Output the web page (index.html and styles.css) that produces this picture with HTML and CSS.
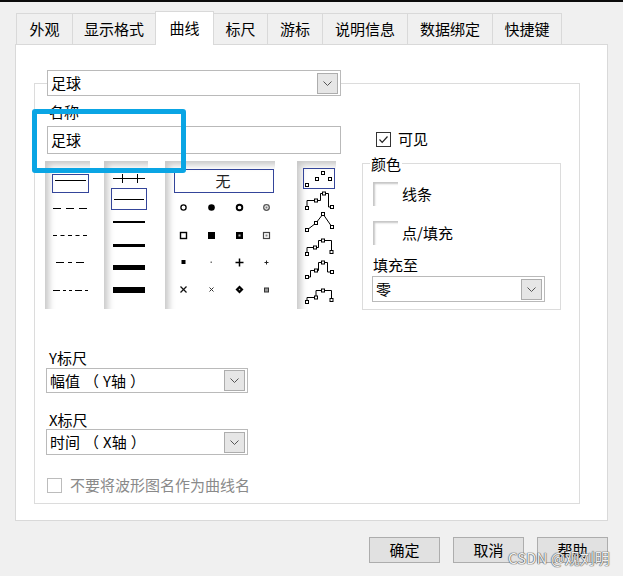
FILE: index.html
```html
<!DOCTYPE html>
<html lang="zh-CN">
<head>
<meta charset="utf-8">
<title>曲线属性</title>
<link rel="stylesheet" href="styles.css">
</head>
<body>
<div class="page">
  <div class="topbar"></div>
  <div class="tabs">
    <div class="tab tab-appearance">外观</div>
    <div class="tab tab-format">显示格式</div>
    <div class="tab tab-plot active">曲线</div>
    <div class="tab tab-scale">标尺</div>
    <div class="tab tab-cursor">游标</div>
    <div class="tab tab-doc">说明信息</div>
    <div class="tab tab-binding">数据绑定</div>
    <div class="tab tab-keys last">快捷键</div>
  </div>

  <div class="panel">
    <div class="group">
      <div class="combo combo-plot">
        <span class="combo-text">足球</span>
        <span class="combo-btn"><svg width="9" height="5" viewBox="0 0 9 5"><polyline points="0.5,0.5 4.5,4.5 8.5,0.5" fill="none" stroke="#555" stroke-width="1"/></svg></span>
      </div>

      <div class="label name-label">名称</div>
      <div class="name-row">
        <div class="textbox">足球</div>
        <div class="check check-visible">
          <span class="box"><svg width="13" height="13" viewBox="0 0 13 13"><polyline points="2.5,6.5 5.2,9.3 10.5,3.5" fill="none" stroke="#222" stroke-width="1.2"/></svg></span>
          <span>可见</span>
        </div>
      </div>

      <div class="style-row">
        <div class="list list-line">
          <svg width="45" height="148" viewBox="0 0 45 148">
            <rect x="7.5" y="13.5" width="36" height="18" fill="none" stroke="#34459a"/>
            <line x1="10" y1="19.5" x2="41" y2="19.5" stroke="#000"/>
            <line x1="8" y1="47.5" x2="43" y2="47.5" stroke="#000" stroke-dasharray="8 5"/>
            <line x1="8" y1="74.5" x2="43" y2="74.5" stroke="#000" stroke-dasharray="4 3.5"/>
            <line x1="11" y1="101.5" x2="43" y2="101.5" stroke="#000" stroke-dasharray="8 4 4 4"/>
            <line x1="8" y1="129.5" x2="43" y2="129.5" stroke="#000" stroke-dasharray="7 3 3 3 3 3"/>
          </svg>
        </div>
        <div class="list list-width">
          <svg width="44" height="148" viewBox="0 0 44 148">
            <line x1="9" y1="17.5" x2="41" y2="17.5" stroke="#000"/>
            <line x1="18.5" y1="13" x2="18.5" y2="22" stroke="#000"/>
            <line x1="33.5" y1="13" x2="33.5" y2="22" stroke="#000"/>
            <rect x="7.5" y="27.5" width="35" height="21" fill="none" stroke="#34459a"/>
            <line x1="10" y1="38.5" x2="40" y2="38.5" stroke="#000"/>
            <line x1="9" y1="61" x2="41" y2="61" stroke="#000" stroke-width="2"/>
            <line x1="9" y1="84.5" x2="41" y2="84.5" stroke="#000" stroke-width="3"/>
            <line x1="9" y1="106.5" x2="41" y2="106.5" stroke="#000" stroke-width="5"/>
            <line x1="9" y1="129" x2="41" y2="129" stroke="#000" stroke-width="6"/>
          </svg>
        </div>
        <div class="list list-point">
          <svg width="110" height="148" viewBox="0 0 110 148">
            <rect x="9.5" y="8.5" width="99" height="23" fill="none" stroke="#34459a"/>
            <text x="58" y="25.5" text-anchor="middle" class="svg-text">无</text>
            <!-- row 1 -->
            <circle cx="18.5" cy="46.5" r="2.6" fill="#fff" stroke="#000" stroke-width="1.3"/>
            <circle cx="46.5" cy="46.5" r="3.3" fill="#000"/>
            <circle cx="74.5" cy="46.5" r="2.8" fill="#fff" stroke="#000" stroke-width="1.9"/>
            <circle cx="101.5" cy="46.5" r="2.8" fill="#fff" stroke="#555" stroke-width="1.3"/>
            <rect x="100.5" y="45.5" width="2" height="2" fill="#777"/>
            <!-- row 2 -->
            <rect x="15.5" y="71.5" width="6" height="6" fill="#fff" stroke="#000" stroke-width="1.4"/>
            <rect x="43" y="71" width="7" height="7" fill="#000"/>
            <rect x="71" y="71" width="7" height="7" fill="#000"/>
            <rect x="73.5" y="73.5" width="2" height="2" fill="#bbb"/>
            <rect x="98.5" y="71.5" width="6" height="6" fill="#fff" stroke="#444" stroke-width="1.2"/>
            <rect x="100.5" y="73.5" width="2" height="2" fill="#888"/>
            <!-- row 3 -->
            <rect x="16.5" y="99" width="4" height="4" fill="#000"/>
            <rect x="45.5" y="100.5" width="1.5" height="1.5" fill="#777"/>
            <line x1="70.5" y1="101.5" x2="78.5" y2="101.5" stroke="#000" stroke-width="1.5"/>
            <line x1="74.5" y1="97.5" x2="74.5" y2="105.5" stroke="#000" stroke-width="1.5"/>
            <line x1="99.5" y1="101.5" x2="103.5" y2="101.5" stroke="#222" stroke-width="1"/>
            <line x1="101.5" y1="99.5" x2="101.5" y2="103.5" stroke="#222" stroke-width="1"/>
            <!-- row 4 -->
            <line x1="15.5" y1="125.5" x2="21.5" y2="131.5" stroke="#111" stroke-width="1.3"/>
            <line x1="21.5" y1="125.5" x2="15.5" y2="131.5" stroke="#111" stroke-width="1.3"/>
            <line x1="44.5" y1="126.5" x2="48.5" y2="130.5" stroke="#333" stroke-width="1"/>
            <line x1="48.5" y1="126.5" x2="44.5" y2="130.5" stroke="#333" stroke-width="1"/>
            <polygon points="74.5,124.5 78.5,128.5 74.5,132.5 70.5,128.5" fill="#000"/>
            <rect x="73.8" y="127.8" width="1.4" height="1.4" fill="#ccc"/>
            <rect x="99.5" y="127" width="4" height="4" fill="#999" stroke="#333" stroke-width="1"/>
          </svg>
        </div>
        <div class="list list-interp">
          <svg width="39" height="148" viewBox="0 0 39 148">
            <rect x="6.5" y="7.5" width="31" height="20" fill="none" stroke="#34459a"/>
            <g fill="#fff" stroke="#000" stroke-width="1">
              <rect x="8.5" y="22.5" width="3" height="3"/>
              <rect x="18.5" y="16.5" width="3" height="3"/>
              <rect x="24.5" y="10.5" width="3" height="3"/>
              <rect x="31.5" y="16.5" width="3" height="3"/>
            </g>
            <g fill="none" stroke="#000" stroke-width="1">
              <polyline points="10,47 10,39.5 19,39.5 23.5,39.5 23.5,32.5 31.5,32.5 31.5,46 35,46"/>
              <polyline points="10,69 19,62 26,53 35,66"/>
              <polyline points="10,93 10,86.5 18,86.5 21.5,86.5 21.5,79.5 26,79.5 34.5,79.5 34.5,91"/>
              <polyline points="10,116 13.5,116 13.5,109.5 19,109.5 21.5,109.5 21.5,101.5 26,101.5 30.5,101.5 30.5,111 35,111"/>
              <polyline points="10,141 10,136.5 19,136.5 19,129.5 26,129.5 34.5,129.5 34.5,139"/>
            </g>
            <g fill="#fff" stroke="#000" stroke-width="1">
              <rect x="8.5" y="45.5" width="3" height="3"/>
              <rect x="17.5" y="38" width="3" height="3"/>
              <rect x="25.5" y="31" width="3" height="3"/>
              <rect x="33.5" y="44.5" width="3" height="3"/>

              <rect x="8.5" y="67.5" width="3" height="3"/>
              <rect x="17.5" y="60.5" width="3" height="3"/>
              <rect x="24.5" y="51.5" width="3" height="3"/>
              <rect x="33.5" y="64.5" width="3" height="3"/>

              <rect x="8.5" y="91.5" width="3" height="3"/>
              <rect x="16.5" y="85" width="3" height="3"/>
              <rect x="24.5" y="78" width="3" height="3"/>
              <rect x="33" y="89.5" width="3" height="3"/>

              <rect x="8.5" y="114.5" width="3" height="3"/>
              <rect x="17.5" y="108" width="3" height="3"/>
              <rect x="24.5" y="100" width="3" height="3"/>
              <rect x="33.5" y="109.5" width="3" height="3"/>

              <rect x="8.5" y="139.5" width="3" height="3"/>
              <rect x="17.5" y="135" width="3" height="3"/>
              <rect x="24.5" y="128" width="3" height="3"/>
              <rect x="33" y="137.5" width="3" height="3"/>
            </g>
          </svg>
        </div>

        <div class="colorgroup">
          <span class="legend">颜色</span>
          <div class="swatch-row row-line"><span class="swatch"></span><span>线条</span></div>
          <div class="swatch-row row-fill"><span class="swatch"></span><span>点/填充</span></div>
          <div class="label fill-label">填充至</div>
          <div class="combo combo-fill">
            <span class="combo-text">零</span>
            <span class="combo-btn"><svg width="9" height="5" viewBox="0 0 9 5"><polyline points="0.5,0.5 4.5,4.5 8.5,0.5" fill="none" stroke="#555" stroke-width="1"/></svg></span>
          </div>
        </div>
      </div>

      <div class="label y-label">Y标尺</div>
      <div class="combo combo-y">
        <span class="combo-text">幅值<span class="paren-open">（</span>Y轴<span class="paren-close">）</span></span>
        <span class="combo-btn"><svg width="9" height="5" viewBox="0 0 9 5"><polyline points="0.5,0.5 4.5,4.5 8.5,0.5" fill="none" stroke="#555" stroke-width="1"/></svg></span>
      </div>

      <div class="label x-label">X标尺</div>
      <div class="combo combo-x">
        <span class="combo-text">时间<span class="paren-open">（</span>X轴<span class="paren-close">）</span></span>
        <span class="combo-btn"><svg width="9" height="5" viewBox="0 0 9 5"><polyline points="0.5,0.5 4.5,4.5 8.5,0.5" fill="none" stroke="#555" stroke-width="1"/></svg></span>
      </div>

      <div class="check check-disabled">
        <span class="box"></span>
        <span>不要将波形图名作为曲线名</span>
      </div>
    </div>
  </div>

  <div class="buttons">
    <div class="btn">确定</div>
    <div class="btn">取消</div>
    <div class="btn">帮助</div>
  </div>

  <div class="highlight"></div>
  <div class="watermark">CSDN @观刘明</div>
</div>
</body>
</html>
```

FILE: styles.css
```css
* {
  box-sizing: border-box;
}

html,
body {
  margin: 0;
  padding: 0;
}

body {
  background: #f0f0f0;
  font-family: "Noto Sans CJK SC", "Noto Sans", sans-serif;
  font-size: 15px;
  color: #000;
}

.page {
  position: relative;
  width: 623px;
  height: 576px;
  overflow: hidden;
}

.topbar {
  height: 2px;
  background: #0b0b0b;
}

/* ---------- tabs ---------- */
.tabs {
  display: flex;
  align-items: flex-end;
  margin: 9px 0 0 16px;
}

.tab {
  height: 31px;
  line-height: 30px;
  text-align: center;
  white-space: nowrap;
  background: #f0f0f0;
  border-top: 1px solid #d9d9d9;
  border-left: 1px solid #d9d9d9;
}

.tab.last {
  border-right: 1px solid #d9d9d9;
}

.tab.active {
  position: relative;
  z-index: 1;
  height: 34px;
  line-height: 31px;
  margin-bottom: -1px;
  background: #fff;
  border-right: 1px solid #d9d9d9;
}

.tab.active + .tab {
  border-left: none;
}

.tab-appearance { width: 56px; }
.tab-format { width: 83px; }
.tab-plot { width: 59px; }
.tab-scale { width: 53px; }
.tab-cursor { width: 55px; }
.tab-doc { width: 85px; }
.tab-binding { width: 85px; }
.tab-keys { width: 70px; }

/* ---------- panel ---------- */
.panel {
  margin-left: 15px;
  width: 593px;
  height: 477px;
  background: #fff;
  border: 1px solid #d9d9d9;
  padding: 38px 0 0 18px;
}

.group {
  width: 546px;
  height: 421px;
  border: 1px solid #dcdcdc;
}

.label {
  height: 16px;
  line-height: 16px;
  white-space: nowrap;
}

/* ---------- combo boxes ---------- */
.combo {
  display: flex;
  align-items: center;
  background: #fff;
  border: 1px solid #bababa;
}

.combo-text {
  flex: 1;
  padding-left: 3px;
  line-height: 16px;
  white-space: nowrap;
}

.paren-open {
  margin-left: 4px;
  margin-right: 4px;
}

.paren-close {
  margin-left: 4px;
}

.combo-btn {
  width: 21px;
  height: 21px;
  margin-right: 2px;
  display: flex;
  align-items: center;
  justify-content: center;
  background: #e6e6e6;
  border: 1px solid #adadad;
}

.combo-btn svg {
  display: block;
}

.combo-plot {
  margin: -14px 0 0 12px;
  width: 294px;
  height: 26px;
}

.name-label {
  margin: 8px 0 0 14px;
}

.name-row {
  display: flex;
  align-items: flex-start;
  margin-top: 6px;
}

.textbox {
  margin-left: 12px;
  width: 294px;
  height: 28px;
  border: 1px solid #b9b9b9;
  padding-left: 3px;
  line-height: 26px;
}

/* ---------- checkboxes ---------- */
.check {
  display: flex;
  align-items: center;
  line-height: 16px;
  white-space: nowrap;
}

.check .box {
  width: 15px;
  height: 15px;
  background: #fff;
  border: 1px solid #333;
  display: flex;
  align-items: center;
  justify-content: center;
}

.check .box svg {
  display: block;
}

.check-visible {
  margin: 5px 0 0 35px;
  gap: 7px;
}

.check-disabled {
  margin: 22px 0 0 12px;
  gap: 8px;
  color: #8a8a8a;
}

.check-disabled .box {
  border-color: #bcbcbc;
}

/* ---------- style lists ---------- */
.style-row {
  display: flex;
  align-items: flex-start;
  margin-top: 7px;
}

.list {
  height: 148px;
  background: #fff;
  box-shadow: inset 6px 6px 6px -2px #c9c9c9;
}

.list svg {
  display: block;
}

.svg-text {
  font-family: "Noto Sans CJK SC", sans-serif;
  font-size: 15px;
  fill: #222;
}

.list-line {
  width: 45px;
  margin-left: 10px;
}

.list-width {
  width: 44px;
  margin-left: 14px;
}

.list-point {
  width: 110px;
  margin-left: 17px;
}

.list-interp {
  width: 39px;
  margin-left: 22px;
}

/* ---------- colour group ---------- */
.colorgroup {
  width: 199px;
  height: 147px;
  margin: 2px 0 0 26px;
  padding-left: 10px;
  border: 1px solid #dcdcdc;
}

.legend {
  display: block;
  width: max-content;
  margin: -8px 0 0 -3px;
  padding: 0 1px;
  background: #fff;
  line-height: 16px;
}

.swatch-row {
  display: flex;
  align-items: center;
  gap: 4px;
  line-height: 16px;
}

.row-line {
  margin-top: 10px;
}

.row-fill {
  margin-top: 15px;
}

.swatch {
  width: 25px;
  height: 24px;
  background: #fff;
  box-shadow: inset 3px 3px 2px -1px #c6c6c6;
}

.fill-label {
  margin-top: 12px;
}

.combo-fill {
  margin: 3px 0 0 -1px;
  width: 173px;
  height: 26px;
}

/* ---------- scales ---------- */
.y-label {
  margin: 40px 0 0 14px;
}

.combo-y {
  margin: 2px 0 0 11px;
  width: 202px;
  height: 25px;
}

.x-label {
  margin: 19px 0 0 14px;
}

.combo-x {
  margin: 1px 0 0 11px;
  width: 202px;
  height: 26px;
}

/* ---------- dialog buttons ---------- */
.buttons {
  display: flex;
  justify-content: flex-end;
  gap: 13px;
  margin-top: 16px;
  padding-right: 15px;
}

.btn {
  width: 71px;
  height: 26px;
  line-height: 24px;
  text-align: center;
  background: #e1e1e1;
  border: 1px solid #adadad;
}

/* ---------- overlays ---------- */
.highlight {
  position: absolute;
  left: 32px;
  top: 109px;
  width: 154px;
  height: 64px;
  border: 5px solid #0aa5e4;
  border-radius: 3px;
}

.watermark {
  position: absolute;
  left: 508px;
  top: 549px;
  font-size: 15px;
  line-height: 18px;
  color: rgba(255, 255, 255, 0.92);
  text-shadow: 0 0 1px #555, 0 0 1px #555, 0 0 1px #666;
  white-space: nowrap;
}
```
